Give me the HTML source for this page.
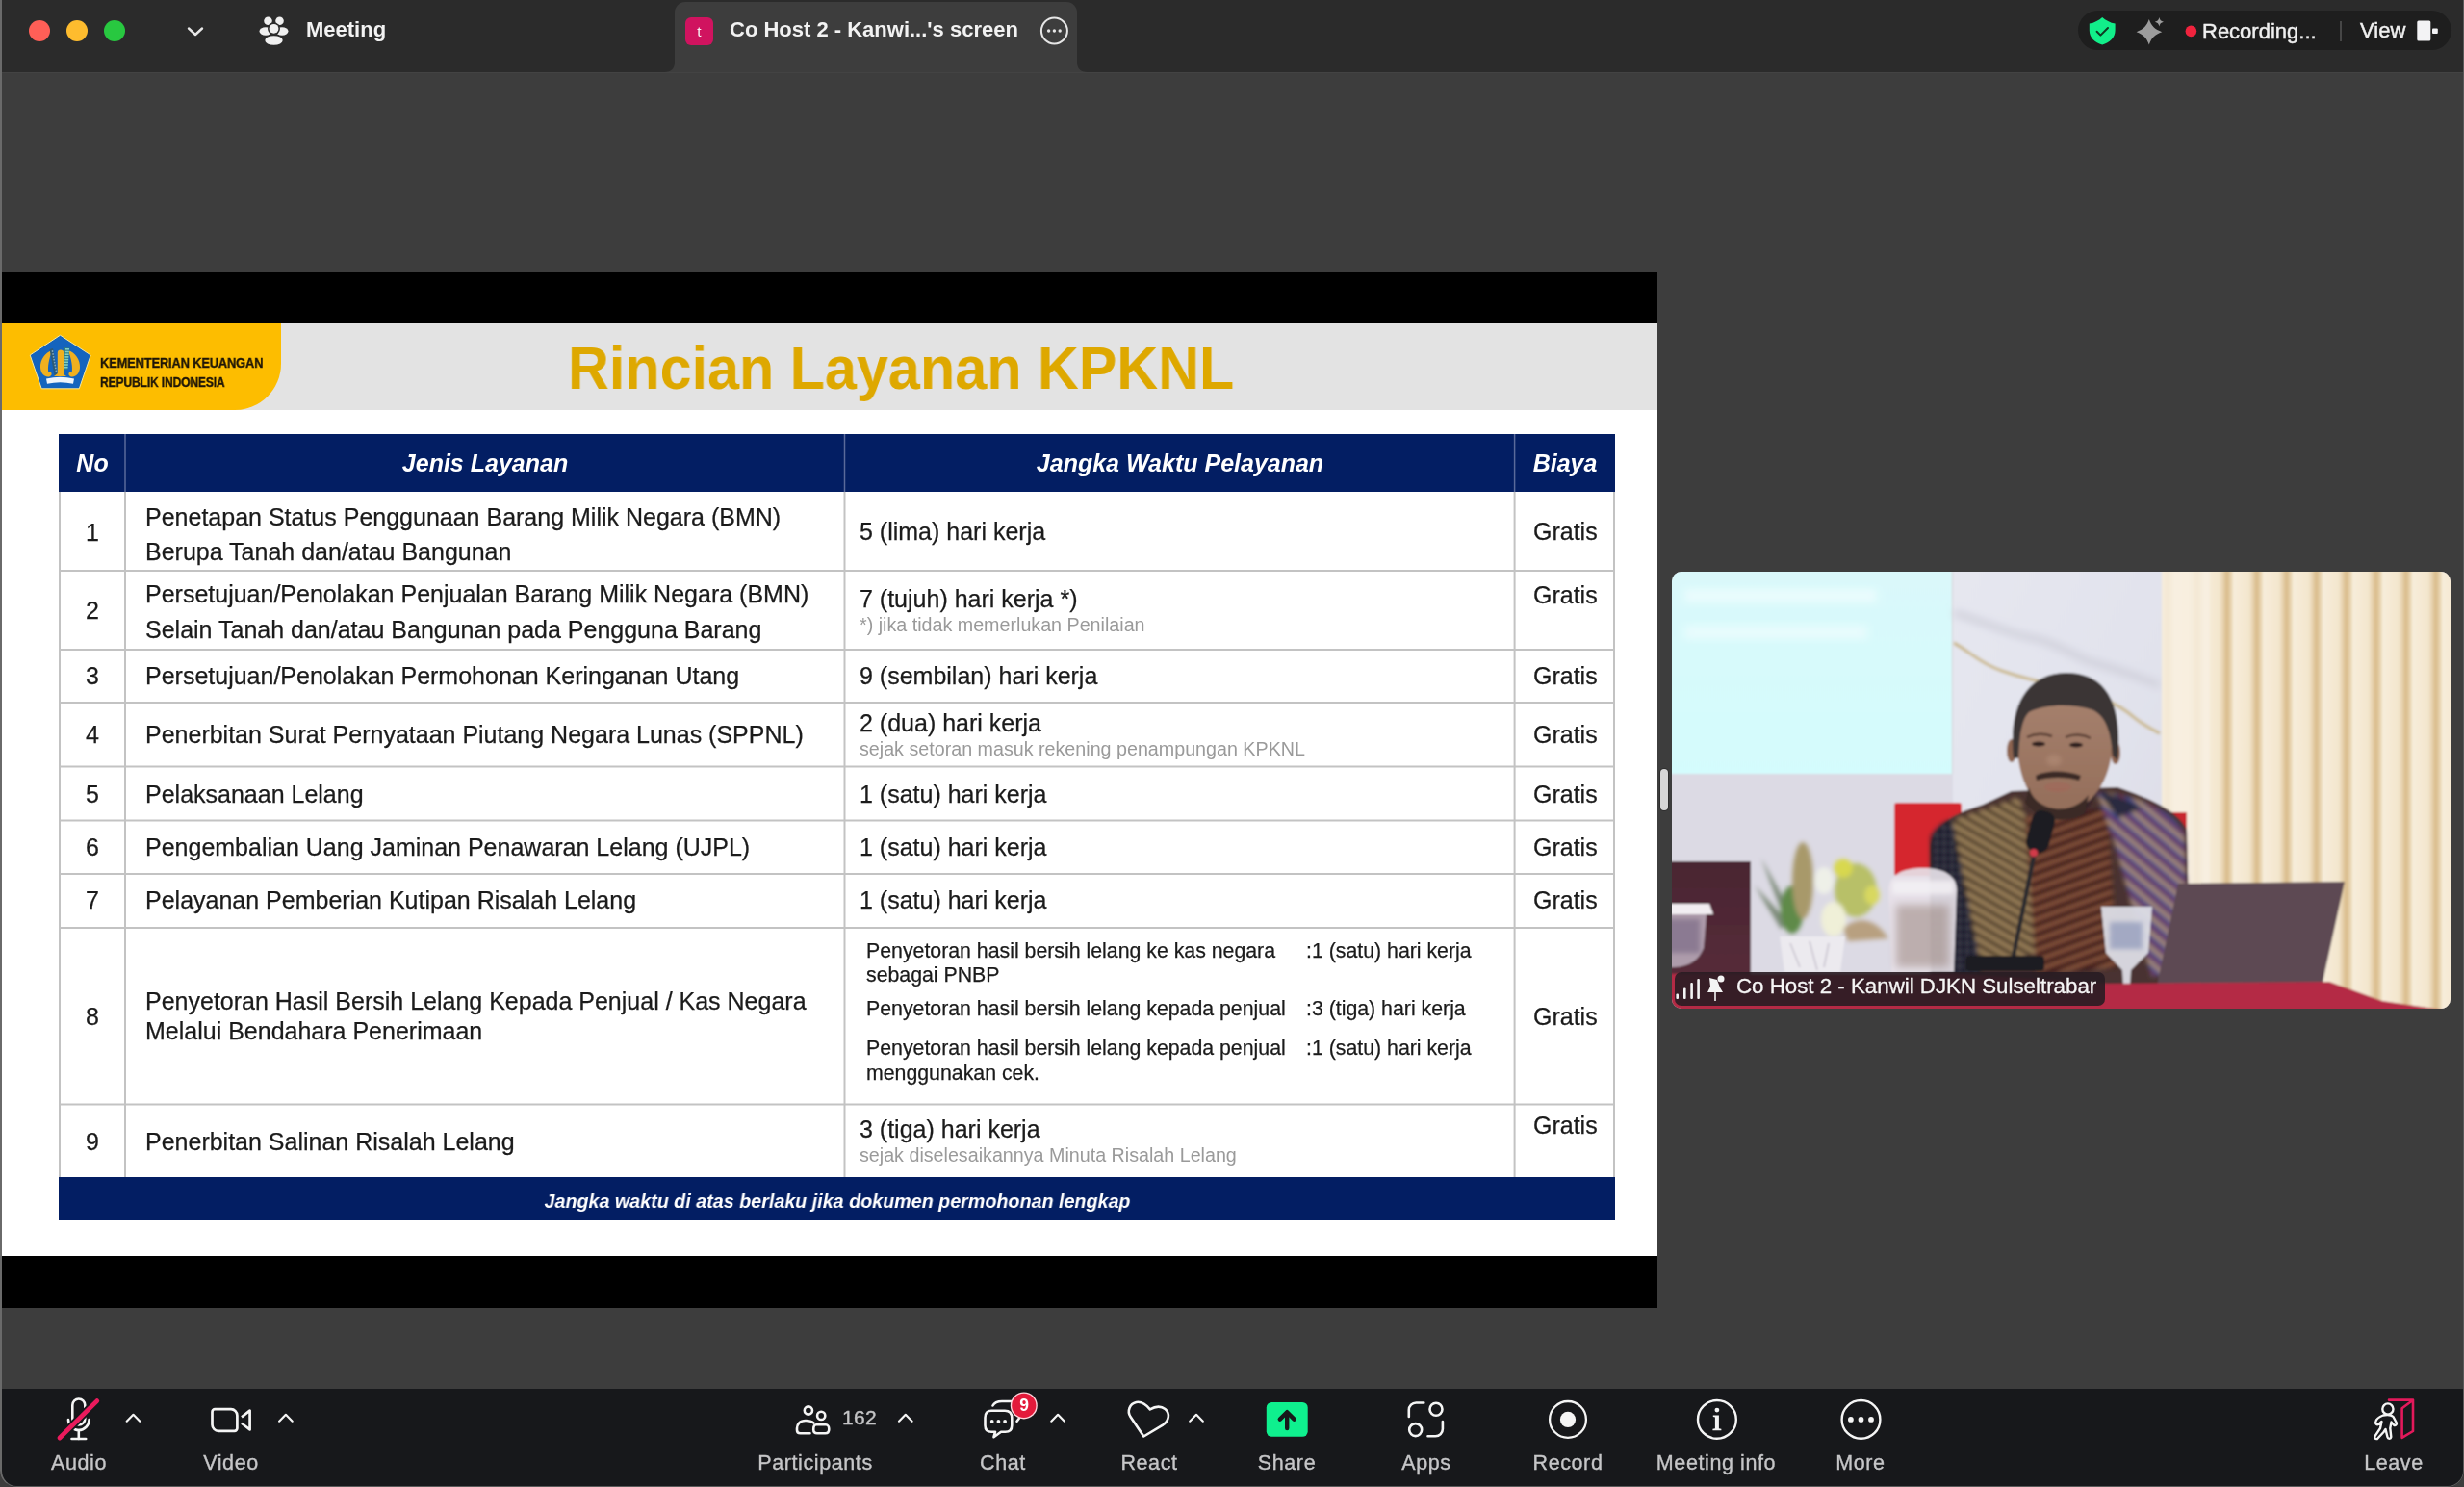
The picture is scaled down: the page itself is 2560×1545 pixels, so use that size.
<!DOCTYPE html><html><head><meta charset="utf-8"><style>
html,body{margin:0;padding:0;}
body{width:2560px;height:1545px;position:relative;overflow:hidden;background:#3d3d3d;font-family:"Liberation Sans", sans-serif;-webkit-font-smoothing:antialiased;}
div{box-sizing:border-box;}
svg{position:absolute;overflow:visible;}
</style></head><body>
<div style="position:absolute;left:0px;top:0px;width:2560px;height:75px;background:#2b2b2b;"></div>
<div style="position:absolute;left:0px;top:75px;width:2560px;height:1px;background:#434343;"></div>
<div style="position:absolute;left:30px;top:21px;width:22px;height:22px;border-radius:50%;background:#ff5f57;"></div>
<div style="position:absolute;left:69px;top:21px;width:22px;height:22px;border-radius:50%;background:#febc2e;"></div>
<div style="position:absolute;left:108px;top:21px;width:22px;height:22px;border-radius:50%;background:#28c840;"></div>
<svg style="left:0;top:0" width="2560" height="75"><polyline points="196,29.5 203,36 210,29.5" fill="none" stroke="#e8e8e8" stroke-width="2.4" stroke-linecap="round" stroke-linejoin="round"/><circle cx="278.5" cy="21.8" r="4.3" fill="#f0f0f0"/><circle cx="290.5" cy="21.8" r="4.3" fill="#f0f0f0"/><ellipse cx="276" cy="32.5" rx="6.5" ry="4.2" fill="#f0f0f0"/><ellipse cx="293" cy="32.5" rx="6.5" ry="4.2" fill="#f0f0f0"/><circle cx="284.5" cy="29.8" r="6.5" fill="#2b2b2b"/><circle cx="284.5" cy="29.8" r="4.9" fill="#f0f0f0"/><ellipse cx="284.5" cy="42" rx="10.5" ry="6" fill="#2b2b2b"/><ellipse cx="284.5" cy="42" rx="9.2" ry="4.8" fill="#f0f0f0"/></svg>
<div style="position:absolute;left:317.5px;top:20.0px;font-size:22px;line-height:22px;color:#f2f2f2;font-weight:bold;font-style:normal;white-space:nowrap;will-change:transform;">Meeting</div>
<div style="position:absolute;left:701px;top:2px;width:418px;height:73px;background:#3d3d3d;border-radius:11px 11px 0 0;"></div>
<svg style="left:0;top:0" width="2560" height="75"><path d="M690,75 Q701,75 701,64 L701,75 Z" fill="#3d3d3d"/><path d="M1130,75 Q1119,75 1119,64 L1119,75 Z" fill="#3d3d3d"/></svg>
<div style="position:absolute;left:711.5px;top:17.5px;width:29px;height:29px;border-radius:6px;background:#d0135f;"></div>
<div style="position:absolute;left:711.5px;top:24.5px;width:29px;text-align:center;font-size:15.5px;line-height:15.5px;color:#f5f5f5;font-weight:normal;font-style:normal;white-space:nowrap;will-change:transform;">t</div>
<div style="position:absolute;left:758.0px;top:19.9px;font-size:22px;line-height:22px;color:#f2f2f2;font-weight:bold;font-style:normal;white-space:nowrap;will-change:transform;">Co Host 2 - Kanwi...&#39;s screen</div>
<svg style="left:0;top:0" width="2560" height="75"><circle cx="1095.4" cy="32" r="13.5" fill="none" stroke="#e6e6e6" stroke-width="2"/><circle cx="1089.6" cy="32" r="1.7" fill="#e6e6e6"/><circle cx="1095.4" cy="32" r="1.7" fill="#e6e6e6"/><circle cx="1101.2" cy="32" r="1.7" fill="#e6e6e6"/></svg>
<div style="position:absolute;left:2159px;top:11px;width:388px;height:41px;border-radius:20.5px;background:#1e1e1e;"></div>
<svg style="left:0;top:0" width="2560" height="75"><path d="M2170.8,24.6 C2176,23.5 2181,21 2184.2,17.9 C2187.5,21 2192.5,23.5 2197.6,24.6 L2197.6,31.5 C2197.6,39.5 2192,44 2184.2,46.4 C2176.4,44 2170.8,39.5 2170.8,31.5 Z" fill="#12ef8a"/><polyline points="2178.6,32.8 2182.4,36.6 2190,29" fill="none" stroke="#0f3a22" stroke-width="2" stroke-linecap="round" stroke-linejoin="round"/><path d="M2232.8,20.000000000000004 C2235.4,27.200000000000003 2238.6000000000004,30.400000000000002 2246.3,33.2 C2238.6000000000004,36.0 2235.4,39.2 2232.8,46.400000000000006 C2230.2000000000003,39.2 2227.0,36.0 2219.6000000000004,33.2 C2227.0,30.400000000000002 2230.2000000000003,27.200000000000003 2232.8,20.000000000000004 Z" fill="#9c9c9c"/><path d="M2243.4,17.9 C2244,20.8 2245,21.9 2248,22.7 C2245,23.5 2244,24.6 2243.4,27.5 C2242.8,24.6 2241.8,23.5 2238.8,22.7 C2241.8,21.9 2242.8,20.8 2243.4,17.9 Z" fill="#9c9c9c"/><circle cx="2276.4" cy="32.4" r="5.8" fill="#f0233d"/><line x1="2432" y1="22" x2="2432" y2="43" stroke="#555" stroke-width="1.5"/><rect x="2511.3" y="21.5" width="14" height="21" rx="1.5" fill="#f3f3f5"/><rect x="2527" y="29.6" width="5.8" height="5.4" rx="1" fill="#f3f3f5"/></svg>
<div style="position:absolute;left:2288.0px;top:22.4px;font-size:22px;line-height:22px;color:#f0f0f0;font-weight:normal;font-style:normal;white-space:nowrap;will-change:transform;-webkit-text-stroke:0.45px #f0f0f0;">Recording...</div>
<div style="position:absolute;left:2452.0px;top:20.9px;font-size:22px;line-height:22px;color:#f0f0f0;font-weight:normal;font-style:normal;white-space:nowrap;will-change:transform;-webkit-text-stroke:0.45px #f0f0f0;">View</div>
<div style="position:absolute;left:2px;top:283px;width:1720px;height:53px;background:#000;"></div>
<div style="position:absolute;left:2px;top:1305px;width:1720px;height:54px;background:#000;"></div>
<div style="position:absolute;left:2px;top:336px;width:1720px;height:969px;background:#fff;"></div>
<div style="position:absolute;left:2px;top:336px;width:1720px;height:90px;background:#e3e3e3;"></div>
<div style="position:absolute;left:2px;top:336px;width:290px;height:90px;background:#fdbd00;border-bottom-right-radius:48px;"></div>
<svg style="left:0;top:0" width="300" height="430"><polygon points="62.5,348.2 94.2,369 82.3,403.8 43.2,403.8 31.2,369" fill="#1464be" stroke="#f3e6a0" stroke-width="1" stroke-linejoin="round"/><path d="M54.3,364 C47.0,366 41.5,374 42.0,382 C42.5,388 46.0,391.5 50.0,391.5 C53.0,391.5 54.5,389 53.0,387 C52.0,385.5 50.5,386 50.5,387.5 C49.0,382 51.0,372 54.3,364 Z" fill="#f0b020"/><path d="M70.7,364 C78.0,366 83.5,374 83.0,382 C82.5,388 79.0,391.5 75.0,391.5 C72.0,391.5 70.5,389 72.0,387 C73.0,385.5 74.5,386 74.5,387.5 C76.0,382 74.0,372 70.7,364 Z" fill="#f0b020"/><path d="M51.5,363 L55,362 L60,390 L56.5,390 Z" fill="#2b5a78"/><circle cx="54.50" cy="365.0" r="0.9" fill="#7fa8c0"/><circle cx="55.05" cy="367.9" r="0.9" fill="#7fa8c0"/><circle cx="55.60" cy="370.8" r="0.9" fill="#7fa8c0"/><circle cx="56.15" cy="373.7" r="0.9" fill="#7fa8c0"/><circle cx="56.70" cy="376.6" r="0.9" fill="#7fa8c0"/><circle cx="57.25" cy="379.5" r="0.9" fill="#7fa8c0"/><circle cx="57.80" cy="382.4" r="0.9" fill="#7fa8c0"/><circle cx="58.35" cy="385.3" r="0.9" fill="#7fa8c0"/><rect x="59.8" y="363.5" width="6.4" height="27" rx="3.2" fill="#f0b020"/><path d="M67,361 L72.5,361.5 L70,384 L66,384 Z" fill="#2f7a80"/><rect x="68.00" y="362.0" width="4" height="1.6" fill="#7fd0c8"/><rect x="67.80" y="364.7" width="4" height="1.6" fill="#7fd0c8"/><rect x="67.60" y="367.4" width="4" height="1.6" fill="#7fd0c8"/><rect x="67.40" y="370.1" width="4" height="1.6" fill="#7fd0c8"/><rect x="67.20" y="372.8" width="4" height="1.6" fill="#7fd0c8"/><rect x="67.00" y="375.5" width="4" height="1.6" fill="#7fd0c8"/><rect x="66.80" y="378.2" width="4" height="1.6" fill="#7fd0c8"/><rect x="66.60" y="380.9" width="4" height="1.6" fill="#7fd0c8"/><path d="M56,391 L62.5,386 L69,391 Z" fill="#f0b020"/><path d="M48,393.5 Q62.5,390 77,393.5 L76,398.8 Q62.5,395.5 49,398.8 Z" fill="#eef4fb"/></svg>
<div style="position:absolute;left:104.2px;top:369.2px;font-size:15px;line-height:15px;color:#1e1608;font-weight:bold;font-style:normal;white-space:nowrap;will-change:transform;transform:scaleX(0.86);transform-origin:0 0;letter-spacing:-0.2px;-webkit-text-stroke:0.35px #1e1608;">KEMENTERIAN KEUANGAN</div>
<div style="position:absolute;left:104.2px;top:389.5px;font-size:14.5px;line-height:14.5px;color:#1e1608;font-weight:bold;font-style:normal;white-space:nowrap;will-change:transform;transform:scaleX(0.835);transform-origin:0 0;letter-spacing:-0.2px;-webkit-text-stroke:0.35px #1e1608;">REPUBLIK INDONESIA</div>
<div style="position:absolute;left:590.0px;top:350.7px;font-size:63px;line-height:63px;color:#dea800;font-weight:bold;font-style:normal;white-space:nowrap;will-change:transform;transform:scaleX(0.9415);transform-origin:0 0;">Rincian Layanan KPKNL</div>
<div style="position:absolute;left:61px;top:451px;width:1617px;height:60px;background:#031e63;"></div>
<svg style="left:0;top:0" width="1722" height="1300"><line x1="61" y1="593" x2="1678" y2="593" stroke="#c3c3c3" stroke-width="2"/><line x1="61" y1="675" x2="1678" y2="675" stroke="#c3c3c3" stroke-width="2"/><line x1="61" y1="730" x2="1678" y2="730" stroke="#c3c3c3" stroke-width="2"/><line x1="61" y1="796.5" x2="1678" y2="796.5" stroke="#c3c3c3" stroke-width="2"/><line x1="61" y1="852.4" x2="1678" y2="852.4" stroke="#c3c3c3" stroke-width="2"/><line x1="61" y1="908" x2="1678" y2="908" stroke="#c3c3c3" stroke-width="2"/><line x1="61" y1="964" x2="1678" y2="964" stroke="#c3c3c3" stroke-width="2"/><line x1="61" y1="1147.6" x2="1678" y2="1147.6" stroke="#c3c3c3" stroke-width="2"/><line x1="62" y1="511" x2="62" y2="1223" stroke="#c3c3c3" stroke-width="2"/><line x1="130" y1="511" x2="130" y2="1223" stroke="#c3c3c3" stroke-width="2"/><line x1="877.5" y1="511" x2="877.5" y2="1223" stroke="#c3c3c3" stroke-width="2"/><line x1="1573.6" y1="511" x2="1573.6" y2="1223" stroke="#c3c3c3" stroke-width="2"/><line x1="1677" y1="511" x2="1677" y2="1223" stroke="#c3c3c3" stroke-width="2"/><line x1="130" y1="451" x2="130" y2="511" stroke="#5a6a9a" stroke-width="1.5"/><line x1="877.5" y1="451" x2="877.5" y2="511" stroke="#5a6a9a" stroke-width="1.5"/><line x1="1573.6" y1="451" x2="1573.6" y2="511" stroke="#5a6a9a" stroke-width="1.5"/></svg>
<div style="position:absolute;left:61px;top:1223px;width:1617px;height:45px;background:#031e63;"></div>
<div style="position:absolute;left:-304.5px;top:469.3px;width:800px;text-align:center;font-size:25px;line-height:25px;color:#fff;font-weight:bold;font-style:italic;white-space:nowrap;will-change:transform;">No</div>
<div style="position:absolute;left:103.8px;top:469.3px;width:800px;text-align:center;font-size:25px;line-height:25px;color:#fff;font-weight:bold;font-style:italic;white-space:nowrap;will-change:transform;">Jenis Layanan</div>
<div style="position:absolute;left:825.5px;top:469.3px;width:800px;text-align:center;font-size:25px;line-height:25px;color:#fff;font-weight:bold;font-style:italic;white-space:nowrap;will-change:transform;">Jangka Waktu Pelayanan</div>
<div style="position:absolute;left:1225.8px;top:469.3px;width:800px;text-align:center;font-size:25px;line-height:25px;color:#fff;font-weight:bold;font-style:italic;white-space:nowrap;will-change:transform;">Biaya</div>
<div style="position:absolute;left:65.5px;top:540.8px;width:60px;text-align:center;font-size:25px;line-height:25px;color:#1b1b1b;font-weight:normal;font-style:normal;white-space:nowrap;will-change:transform;-webkit-text-stroke:0.25px #1b1b1b;">1</div>
<div style="position:absolute;left:65.5px;top:621.7px;width:60px;text-align:center;font-size:25px;line-height:25px;color:#1b1b1b;font-weight:normal;font-style:normal;white-space:nowrap;will-change:transform;-webkit-text-stroke:0.25px #1b1b1b;">2</div>
<div style="position:absolute;left:65.5px;top:690.4px;width:60px;text-align:center;font-size:25px;line-height:25px;color:#1b1b1b;font-weight:normal;font-style:normal;white-space:nowrap;will-change:transform;-webkit-text-stroke:0.25px #1b1b1b;">3</div>
<div style="position:absolute;left:65.5px;top:751.1px;width:60px;text-align:center;font-size:25px;line-height:25px;color:#1b1b1b;font-weight:normal;font-style:normal;white-space:nowrap;will-change:transform;-webkit-text-stroke:0.25px #1b1b1b;">4</div>
<div style="position:absolute;left:65.5px;top:812.5px;width:60px;text-align:center;font-size:25px;line-height:25px;color:#1b1b1b;font-weight:normal;font-style:normal;white-space:nowrap;will-change:transform;-webkit-text-stroke:0.25px #1b1b1b;">5</div>
<div style="position:absolute;left:65.5px;top:867.7px;width:60px;text-align:center;font-size:25px;line-height:25px;color:#1b1b1b;font-weight:normal;font-style:normal;white-space:nowrap;will-change:transform;-webkit-text-stroke:0.25px #1b1b1b;">6</div>
<div style="position:absolute;left:65.5px;top:923.3px;width:60px;text-align:center;font-size:25px;line-height:25px;color:#1b1b1b;font-weight:normal;font-style:normal;white-space:nowrap;will-change:transform;-webkit-text-stroke:0.25px #1b1b1b;">7</div>
<div style="position:absolute;left:65.5px;top:1043.8px;width:60px;text-align:center;font-size:25px;line-height:25px;color:#1b1b1b;font-weight:normal;font-style:normal;white-space:nowrap;will-change:transform;-webkit-text-stroke:0.25px #1b1b1b;">8</div>
<div style="position:absolute;left:65.5px;top:1173.5px;width:60px;text-align:center;font-size:25px;line-height:25px;color:#1b1b1b;font-weight:normal;font-style:normal;white-space:nowrap;will-change:transform;-webkit-text-stroke:0.25px #1b1b1b;">9</div>
<div style="position:absolute;left:151.3px;top:524.5px;font-size:25px;line-height:25px;color:#1b1b1b;font-weight:normal;font-style:normal;white-space:nowrap;will-change:transform;-webkit-text-stroke:0.25px #1b1b1b;">Penetapan Status Penggunaan Barang Milik Negara (BMN)</div>
<div style="position:absolute;left:151.3px;top:561.3px;font-size:25px;line-height:25px;color:#1b1b1b;font-weight:normal;font-style:normal;white-space:nowrap;will-change:transform;-webkit-text-stroke:0.25px #1b1b1b;">Berupa Tanah dan/atau Bangunan</div>
<div style="position:absolute;left:151.3px;top:604.6px;font-size:25px;line-height:25px;color:#1b1b1b;font-weight:normal;font-style:normal;white-space:nowrap;will-change:transform;-webkit-text-stroke:0.25px #1b1b1b;">Persetujuan/Penolakan Penjualan Barang Milik Negara (BMN)</div>
<div style="position:absolute;left:151.3px;top:642.1px;font-size:25px;line-height:25px;color:#1b1b1b;font-weight:normal;font-style:normal;white-space:nowrap;will-change:transform;-webkit-text-stroke:0.25px #1b1b1b;">Selain Tanah dan/atau Bangunan pada Pengguna Barang</div>
<div style="position:absolute;left:151.3px;top:690.4px;font-size:25px;line-height:25px;color:#1b1b1b;font-weight:normal;font-style:normal;white-space:nowrap;will-change:transform;-webkit-text-stroke:0.25px #1b1b1b;">Persetujuan/Penolakan Permohonan Keringanan Utang</div>
<div style="position:absolute;left:151.3px;top:751.1px;font-size:25px;line-height:25px;color:#1b1b1b;font-weight:normal;font-style:normal;white-space:nowrap;will-change:transform;-webkit-text-stroke:0.25px #1b1b1b;">Penerbitan Surat Pernyataan Piutang Negara Lunas (SPPNL)</div>
<div style="position:absolute;left:151.3px;top:812.5px;font-size:25px;line-height:25px;color:#1b1b1b;font-weight:normal;font-style:normal;white-space:nowrap;will-change:transform;-webkit-text-stroke:0.25px #1b1b1b;">Pelaksanaan Lelang</div>
<div style="position:absolute;left:151.3px;top:867.7px;font-size:25px;line-height:25px;color:#1b1b1b;font-weight:normal;font-style:normal;white-space:nowrap;will-change:transform;-webkit-text-stroke:0.25px #1b1b1b;">Pengembalian Uang Jaminan Penawaran Lelang (UJPL)</div>
<div style="position:absolute;left:151.3px;top:923.3px;font-size:25px;line-height:25px;color:#1b1b1b;font-weight:normal;font-style:normal;white-space:nowrap;will-change:transform;-webkit-text-stroke:0.25px #1b1b1b;">Pelayanan Pemberian Kutipan Risalah Lelang</div>
<div style="position:absolute;left:151.3px;top:1028.2px;font-size:25px;line-height:25px;color:#1b1b1b;font-weight:normal;font-style:normal;white-space:nowrap;will-change:transform;-webkit-text-stroke:0.25px #1b1b1b;">Penyetoran Hasil Bersih Lelang Kepada Penjual / Kas Negara</div>
<div style="position:absolute;left:151.3px;top:1058.9px;font-size:25px;line-height:25px;color:#1b1b1b;font-weight:normal;font-style:normal;white-space:nowrap;will-change:transform;-webkit-text-stroke:0.25px #1b1b1b;">Melalui Bendahara Penerimaan</div>
<div style="position:absolute;left:151.3px;top:1173.5px;font-size:25px;line-height:25px;color:#1b1b1b;font-weight:normal;font-style:normal;white-space:nowrap;will-change:transform;-webkit-text-stroke:0.25px #1b1b1b;">Penerbitan Salinan Risalah Lelang</div>
<div style="position:absolute;left:893.0px;top:539.8px;font-size:25px;line-height:25px;color:#1b1b1b;font-weight:normal;font-style:normal;white-space:nowrap;will-change:transform;-webkit-text-stroke:0.25px #1b1b1b;">5 (lima) hari kerja</div>
<div style="position:absolute;left:893.0px;top:609.8px;font-size:25px;line-height:25px;color:#1b1b1b;font-weight:normal;font-style:normal;white-space:nowrap;will-change:transform;-webkit-text-stroke:0.25px #1b1b1b;">7 (tujuh) hari kerja *)</div>
<div style="position:absolute;left:893.0px;top:690.4px;font-size:25px;line-height:25px;color:#1b1b1b;font-weight:normal;font-style:normal;white-space:nowrap;will-change:transform;-webkit-text-stroke:0.25px #1b1b1b;">9 (sembilan) hari kerja</div>
<div style="position:absolute;left:893.0px;top:739.1px;font-size:25px;line-height:25px;color:#1b1b1b;font-weight:normal;font-style:normal;white-space:nowrap;will-change:transform;-webkit-text-stroke:0.25px #1b1b1b;">2 (dua) hari kerja</div>
<div style="position:absolute;left:893.0px;top:812.5px;font-size:25px;line-height:25px;color:#1b1b1b;font-weight:normal;font-style:normal;white-space:nowrap;will-change:transform;-webkit-text-stroke:0.25px #1b1b1b;">1 (satu) hari kerja</div>
<div style="position:absolute;left:893.0px;top:867.7px;font-size:25px;line-height:25px;color:#1b1b1b;font-weight:normal;font-style:normal;white-space:nowrap;will-change:transform;-webkit-text-stroke:0.25px #1b1b1b;">1 (satu) hari kerja</div>
<div style="position:absolute;left:893.0px;top:923.3px;font-size:25px;line-height:25px;color:#1b1b1b;font-weight:normal;font-style:normal;white-space:nowrap;will-change:transform;-webkit-text-stroke:0.25px #1b1b1b;">1 (satu) hari kerja</div>
<div style="position:absolute;left:893.0px;top:1160.5px;font-size:25px;line-height:25px;color:#1b1b1b;font-weight:normal;font-style:normal;white-space:nowrap;will-change:transform;-webkit-text-stroke:0.25px #1b1b1b;">3 (tiga) hari kerja</div>
<div style="position:absolute;left:893.0px;top:639.8px;font-size:19.7px;line-height:19.7px;color:#9a9a9a;font-weight:normal;font-style:normal;white-space:nowrap;will-change:transform;">*) jika tidak memerlukan Penilaian</div>
<div style="position:absolute;left:893.0px;top:768.5px;font-size:19.7px;line-height:19.7px;color:#9a9a9a;font-weight:normal;font-style:normal;white-space:nowrap;will-change:transform;">sejak setoran masuk rekening penampungan KPKNL</div>
<div style="position:absolute;left:893.0px;top:1190.6px;font-size:19.7px;line-height:19.7px;color:#9a9a9a;font-weight:normal;font-style:normal;white-space:nowrap;will-change:transform;">sejak diselesaikannya Minuta Risalah Lelang</div>
<div style="position:absolute;left:900.0px;top:977.5px;font-size:21.3px;line-height:21.3px;color:#1b1b1b;font-weight:normal;font-style:normal;white-space:nowrap;will-change:transform;-webkit-text-stroke:0.25px #1b1b1b;">Penyetoran hasil bersih lelang ke kas negara</div>
<div style="position:absolute;left:900.0px;top:1003.0px;font-size:21.3px;line-height:21.3px;color:#1b1b1b;font-weight:normal;font-style:normal;white-space:nowrap;will-change:transform;-webkit-text-stroke:0.25px #1b1b1b;">sebagai PNBP</div>
<div style="position:absolute;left:900.0px;top:1038.0px;font-size:21.3px;line-height:21.3px;color:#1b1b1b;font-weight:normal;font-style:normal;white-space:nowrap;will-change:transform;-webkit-text-stroke:0.25px #1b1b1b;">Penyetoran hasil bersih lelang kepada penjual</div>
<div style="position:absolute;left:900.0px;top:1079.0px;font-size:21.3px;line-height:21.3px;color:#1b1b1b;font-weight:normal;font-style:normal;white-space:nowrap;will-change:transform;-webkit-text-stroke:0.25px #1b1b1b;">Penyetoran hasil bersih lelang kepada penjual</div>
<div style="position:absolute;left:900.0px;top:1105.2px;font-size:21.3px;line-height:21.3px;color:#1b1b1b;font-weight:normal;font-style:normal;white-space:nowrap;will-change:transform;-webkit-text-stroke:0.25px #1b1b1b;">menggunakan cek.</div>
<div style="position:absolute;left:1357.0px;top:977.5px;font-size:21.3px;line-height:21.3px;color:#1b1b1b;font-weight:normal;font-style:normal;white-space:nowrap;will-change:transform;-webkit-text-stroke:0.25px #1b1b1b;">:1 (satu) hari kerja</div>
<div style="position:absolute;left:1357.0px;top:1038.0px;font-size:21.3px;line-height:21.3px;color:#1b1b1b;font-weight:normal;font-style:normal;white-space:nowrap;will-change:transform;-webkit-text-stroke:0.25px #1b1b1b;">:3 (tiga) hari kerja</div>
<div style="position:absolute;left:1357.0px;top:1079.0px;font-size:21.3px;line-height:21.3px;color:#1b1b1b;font-weight:normal;font-style:normal;white-space:nowrap;will-change:transform;-webkit-text-stroke:0.25px #1b1b1b;">:1 (satu) hari kerja</div>
<div style="position:absolute;left:1593.0px;top:539.8px;font-size:25px;line-height:25px;color:#1b1b1b;font-weight:normal;font-style:normal;white-space:nowrap;will-change:transform;-webkit-text-stroke:0.25px #1b1b1b;">Gratis</div>
<div style="position:absolute;left:1593.0px;top:606.3px;font-size:25px;line-height:25px;color:#1b1b1b;font-weight:normal;font-style:normal;white-space:nowrap;will-change:transform;-webkit-text-stroke:0.25px #1b1b1b;">Gratis</div>
<div style="position:absolute;left:1593.0px;top:690.4px;font-size:25px;line-height:25px;color:#1b1b1b;font-weight:normal;font-style:normal;white-space:nowrap;will-change:transform;-webkit-text-stroke:0.25px #1b1b1b;">Gratis</div>
<div style="position:absolute;left:1593.0px;top:751.1px;font-size:25px;line-height:25px;color:#1b1b1b;font-weight:normal;font-style:normal;white-space:nowrap;will-change:transform;-webkit-text-stroke:0.25px #1b1b1b;">Gratis</div>
<div style="position:absolute;left:1593.0px;top:812.5px;font-size:25px;line-height:25px;color:#1b1b1b;font-weight:normal;font-style:normal;white-space:nowrap;will-change:transform;-webkit-text-stroke:0.25px #1b1b1b;">Gratis</div>
<div style="position:absolute;left:1593.0px;top:867.7px;font-size:25px;line-height:25px;color:#1b1b1b;font-weight:normal;font-style:normal;white-space:nowrap;will-change:transform;-webkit-text-stroke:0.25px #1b1b1b;">Gratis</div>
<div style="position:absolute;left:1593.0px;top:923.3px;font-size:25px;line-height:25px;color:#1b1b1b;font-weight:normal;font-style:normal;white-space:nowrap;will-change:transform;-webkit-text-stroke:0.25px #1b1b1b;">Gratis</div>
<div style="position:absolute;left:1593.0px;top:1043.6px;font-size:25px;line-height:25px;color:#1b1b1b;font-weight:normal;font-style:normal;white-space:nowrap;will-change:transform;-webkit-text-stroke:0.25px #1b1b1b;">Gratis</div>
<div style="position:absolute;left:1593.0px;top:1157.1px;font-size:25px;line-height:25px;color:#1b1b1b;font-weight:normal;font-style:normal;white-space:nowrap;will-change:transform;-webkit-text-stroke:0.25px #1b1b1b;">Gratis</div>
<div style="position:absolute;left:169.5px;top:1237.2px;width:1400px;text-align:center;font-size:21px;line-height:21px;color:#fff;font-weight:bold;font-style:italic;white-space:nowrap;will-change:transform;transform:scaleX(0.9385);">Jangka waktu di atas berlaku jika dokumen permohonan lengkap</div>
<div style="position:absolute;left:1724.8px;top:799.4px;width:7.8px;height:43px;border-radius:4px;background:#d6d6d6;box-shadow:0 0 0 1px rgba(30,30,30,0.5);"></div>
<div style="position:absolute;left:1737px;top:594px;width:809px;height:454px;border-radius:10px;overflow:hidden;background:#d8d2d6;">
<svg style="left:0;top:0" width="809" height="454" viewBox="1737 594 809 454"><defs><filter id="b1" x="-10%" y="-10%" width="120%" height="120%"><feGaussianBlur stdDeviation="1.2"/></filter><filter id="b2" x="-20%" y="-20%" width="140%" height="140%"><feGaussianBlur stdDeviation="2"/></filter><filter id="b4" x="-30%" y="-30%" width="160%" height="160%"><feGaussianBlur stdDeviation="4"/></filter><filter id="b8" x="-30%" y="-30%" width="160%" height="160%"><feGaussianBlur stdDeviation="8"/></filter><linearGradient id="cy" x1="0" y1="0" x2="0" y2="1"><stop offset="0" stop-color="#daf8fa"/><stop offset="1" stop-color="#d4fcfd"/></linearGradient><linearGradient id="mar" x1="0" y1="0" x2="1" y2="1"><stop offset="0" stop-color="#e6e7f0"/><stop offset="0.6" stop-color="#e1e2ec"/><stop offset="1" stop-color="#dcdbe4"/></linearGradient><linearGradient id="st" x1="0" y1="0" x2="1" y2="0"><stop offset="0" stop-color="#f7eddb"/><stop offset="0.55" stop-color="#f3e6cd"/><stop offset="0.8" stop-color="#d9bb8a"/><stop offset="1" stop-color="#f0e2c6"/></linearGradient><pattern id="stp" x="2289" y="0" width="31" height="454" patternUnits="userSpaceOnUse"><rect width="31" height="454" fill="url(#st)"/></pattern><linearGradient id="face" x1="0" y1="0" x2="0" y2="1"><stop offset="0" stop-color="#a88370"/><stop offset="1" stop-color="#946e5a"/></linearGradient></defs><g filter="url(#b1)"><rect x="1730" y="590" width="298" height="214" fill="url(#cy)"/><rect x="1750" y="612" width="200" height="14" fill="#ecfdfe" opacity="0.9" filter="url(#b4)"/><rect x="1750" y="650" width="190" height="14" fill="#ecfdfe" opacity="0.8" filter="url(#b4)"/><rect x="1730" y="804" width="300" height="252" fill="#dcdae4"/><rect x="2029" y="590" width="217" height="466" fill="url(#mar)"/><path d="M2030,668 C2045,676 2058,690 2080,697 C2100,704 2115,708 2140,712 C2170,718 2200,730 2218,746 C2228,754 2236,758 2244,762" fill="none" stroke="#c6b07e" stroke-width="2.6" filter="url(#b1)"/><path d="M2030,637 C2060,645 2090,660 2112,663 C2135,667 2155,682 2173,688 C2200,695 2225,705 2244,712" fill="none" stroke="#c9c9d3" stroke-width="5" filter="url(#b4)"/><rect x="2246" y="590" width="310" height="466" fill="url(#stp)"/><rect x="2246" y="590" width="50" height="466" fill="#f8f0e2" opacity="0.85"/><rect x="1968" y="834" width="70" height="76" rx="3" fill="#d5282f"/><rect x="2252" y="844" width="20" height="75" fill="#c8262e"/><defs><pattern id="gold" width="9" height="9" patternUnits="userSpaceOnUse" patternTransform="rotate(30)"><rect width="9" height="9" fill="#a88c62"/><rect width="9" height="4.5" fill="#35251f"/></pattern><pattern id="navy" width="8" height="8" patternUnits="userSpaceOnUse"><rect width="8" height="8" fill="#1c1d2c"/><circle cx="4" cy="4" r="1.3" fill="#7c7a90"/></pattern><pattern id="redp" width="10" height="10" patternUnits="userSpaceOnUse" patternTransform="rotate(-20)"><rect width="10" height="10" fill="#5e2622"/><rect width="10" height="2.5" fill="#9a6a4a"/><rect y="5" width="10" height="3" fill="#24181a"/></pattern><pattern id="bluep" width="12" height="12" patternUnits="userSpaceOnUse" patternTransform="rotate(40)"><rect width="12" height="12" fill="#3a4a8e"/><rect width="12" height="4" fill="#b09070"/><rect y="8" width="12" height="2" fill="#8a2a30"/></pattern></defs><path d="M2007,1040 L2005,880 C2008,858 2030,845 2060,836 L2090,822 L2200,818 C2235,830 2262,842 2272,862 L2276,1040 Z" fill="#4a3330"/><g filter="url(#b2)"><path d="M2006,870 C2012,856 2025,850 2040,850 L2060,1040 L2007,1040 Z" fill="url(#navy)"/><path d="M2028,852 L2098,828 L2112,870 L2120,990 L2058,1005 Z" fill="url(#gold)"/><path d="M2104,848 L2190,840 L2200,1005 L2116,1012 Z" fill="url(#redp)"/><path d="M2178,822 C2220,826 2255,840 2270,865 L2274,1010 L2235,1015 L2195,870 Z" fill="url(#bluep)"/><path d="M2180,822 C2200,826 2215,832 2225,840 L2200,850 Z" fill="#2a2a40"/><path d="M2120,825 L2150,835 L2180,820 L2165,845 L2135,848 Z" fill="#2a1e26"/></g><path d="M2095,765 C2093,735 2110,712 2146,710 C2180,710 2195,735 2195,765 C2195,795 2187,818 2168,834 C2152,845 2128,845 2115,832 C2100,815 2096,792 2095,765 Z" fill="url(#face)"/><ellipse cx="2090" cy="780" rx="5" ry="12" fill="#8d644f"/><ellipse cx="2198" cy="782" rx="5" ry="12" fill="#8d644f"/><path d="M2092,788 C2086,735 2105,700 2146,699 C2188,699 2206,730 2200,790 L2195,785 C2193,760 2188,745 2175,738 C2155,731 2125,731 2108,740 C2100,748 2098,765 2097,788 Z" fill="#3a3535"/><ellipse cx="2118" cy="773" rx="7" ry="2.6" fill="#2a1e1c"/><ellipse cx="2157" cy="774" rx="7" ry="2.6" fill="#2a1e1c"/><path d="M2106,766 C2114,762 2124,762 2132,765 M2146,766 C2154,762 2165,763 2172,767" stroke="#5a4036" stroke-width="2.5" fill="none"/><ellipse cx="2134" cy="790" rx="8" ry="6" fill="#b08a74" opacity="0.7" filter="url(#b2)"/><path d="M2115,806 C2125,800 2148,800 2162,806 L2160,811 C2148,807 2128,807 2116,811 Z" fill="#3a2c28"/><ellipse cx="2138" cy="818" rx="14" ry="5" fill="#a06a5a" opacity="0.8"/><path d="M2108,818 C2114,842 2150,850 2170,826 L2166,845 C2150,856 2118,854 2104,834 Z" fill="#3a2c28"/><path d="M2112,884 L2116,886 L2092,1003 L2088,1002 Z" fill="#2a2a2e"/><rect x="2108" y="842" width="24" height="44" rx="10" fill="#1d1d20" transform="rotate(15 2120 864)"/><circle cx="2113" cy="886" r="4" fill="#d23a4a"/><defs><linearGradient id="llap" x1="0" y1="0" x2="0" y2="1"><stop offset="0" stop-color="#4a2532"/><stop offset="1" stop-color="#5a2e3c"/></linearGradient></defs><rect x="1730" y="895" width="89" height="160" fill="url(#llap)"/><path d="M1730,939 L1776,939 L1780,950 L1730,950 Z" fill="#f2eef2"/><path d="M1730,950 L1773,950 L1770,985 C1765,998 1755,1004 1740,1005 L1730,1005 Z" fill="#b8a8b8" opacity="0.9"/><rect x="1732" y="955" width="34" height="35" fill="#6a5a7a" opacity="0.5" filter="url(#b2)"/><g filter="url(#b2)"><path d="M1823,920 L1860,960 L1850,965 Z" fill="#7c8a78"/><path d="M1830,892 L1865,955 L1855,958 Z" fill="#7c8a78"/><ellipse cx="1862" cy="945" rx="12" ry="25" fill="#5f8a4a"/><ellipse cx="1873" cy="915" rx="11" ry="40" fill="#a8996a"/><ellipse cx="1928" cy="925" rx="22" ry="28" fill="#b8c068"/><ellipse cx="1915" cy="902" rx="10" ry="10" fill="#d8d850"/><ellipse cx="1945" cy="930" rx="8" ry="10" fill="#d8d860"/><ellipse cx="1905" cy="955" rx="13" ry="18" fill="#f0f0d8"/><ellipse cx="1895" cy="915" rx="10" ry="14" fill="#eef0e8"/><path d="M1915,965 C1930,950 1950,955 1962,975 L1920,978 Z" fill="#b8a080"/></g><path d="M1849,973 L1917,973 L1912,1010 L1854,1010 Z" fill="#eceaef"/><path d="M1860,980 L1870,1005 M1880,978 L1888,1008 M1900,980 L1895,1005" stroke="#d0ccd6" stroke-width="2"/><path d="M1962,925 C1962,910 1975,902 1998,902 C2020,902 2033,910 2033,925 L2030,1010 L1965,1010 Z" fill="#e6e1e8" opacity="0.92"/><rect x="1970" y="940" width="55" height="65" fill="#8a7268" opacity="0.45" filter="url(#b4)"/><rect x="1966" y="915" width="64" height="14" fill="#f4f2f6" opacity="0.8" filter="url(#b2)"/><rect x="2042" y="993" width="82" height="16" rx="4" fill="#1e1e24"/><polygon points="2263,918 2436,916 2411,1030 2239,1034" fill="#5d4a53"/><path d="M2183,942 L2236,942 L2232,990 L2214,1008 L2213,1025 L2226,1030 L2193,1030 L2206,1025 L2205,1008 L2188,990 Z" fill="#dcdde6" opacity="0.95"/><rect x="2192" y="958" width="34" height="28" fill="#5a6aa0" opacity="0.4" filter="url(#b2)"/><path d="M1730,1012 L2030,1012 L2190,1022 L2420,1020 L2475,1040 L2556,1052 L1730,1052 Z" fill="#b42a44"/></g></svg>
</div>
<div style="position:absolute;left:1740px;top:1010px;width:447px;height:35px;border-radius:7px;background:rgba(40,28,34,0.9);"></div>
<svg style="left:0;top:0" width="2560" height="1100"><rect x="1741.4" y="1032.6" width="2.6" height="5.4" rx="1" fill="#f4f4f4"/><rect x="1749" y="1026.6" width="2.6" height="11.4" rx="1" fill="#f4f4f4"/><rect x="1756.3" y="1021" width="2.6" height="17" rx="1" fill="#f4f4f4"/><rect x="1763.3" y="1017" width="2.6" height="21" rx="1" fill="#f4f4f4"/><path d="M1776,1016 L1784,1018 L1787,1026 L1790,1031 L1774,1031 L1777,1025 Z" fill="#f4f4f4"/><rect x="1781.2" y="1030" width="1.6" height="10" fill="#f4f4f4"/><circle cx="1788" cy="1017" r="3.5" fill="#f4f4f4"/></svg>
<div style="position:absolute;left:1804.2px;top:1014.1px;font-size:22.3px;line-height:22.3px;color:#f5f5f5;font-weight:normal;font-style:normal;white-space:nowrap;will-change:transform;-webkit-text-stroke:0.3px #f5f5f5;">Co Host 2 - Kanwil DJKN Sulseltrabar</div>
<div style="position:absolute;left:0;top:1443px;width:2560px;height:102px;background:#17181b;border-radius:0 0 17px 17px;"></div>
<svg style="left:0;top:0" width="2560" height="1545"><g fill="none" stroke="#f5f5f5" stroke-width="2.6" stroke-linecap="round"><path d="M75.3,1474 L75.3,1460 A6.5,6.5 0 0 1 88.3,1460 L88.3,1474 A6.5,6.5 0 0 1 75.3,1474 Z"/><path d="M71,1475 A10.8,11 0 0 0 92.6,1475"/><line x1="81.8" y1="1486" x2="81.8" y2="1495"/><line x1="74.5" y1="1495" x2="89.2" y2="1495"/></g><line x1="62" y1="1494" x2="100.8" y2="1455.6" stroke="#17181b" stroke-width="8.5" stroke-linecap="round"/><line x1="62" y1="1494" x2="100.8" y2="1455.6" stroke="#eb1a5c" stroke-width="4.8" stroke-linecap="round"/><polyline points="131.7,1476.7 138.5,1469.8 145.3,1476.7" fill="none" stroke="#f5f5f5" stroke-width="2.2" stroke-linecap="round" stroke-linejoin="round"/><polyline points="290.09999999999997,1476.7 296.9,1469.8 303.7,1476.7" fill="none" stroke="#f5f5f5" stroke-width="2.2" stroke-linecap="round" stroke-linejoin="round"/><polyline points="934.0,1476.7 940.8,1469.8 947.5999999999999,1476.7" fill="none" stroke="#f5f5f5" stroke-width="2.2" stroke-linecap="round" stroke-linejoin="round"/><polyline points="1092.3,1476.7 1099.1,1469.8 1105.8999999999999,1476.7" fill="none" stroke="#f5f5f5" stroke-width="2.2" stroke-linecap="round" stroke-linejoin="round"/><polyline points="1236.2,1476.7 1243,1469.8 1249.8,1476.7" fill="none" stroke="#f5f5f5" stroke-width="2.2" stroke-linecap="round" stroke-linejoin="round"/><g fill="none" stroke="#f5f5f5" stroke-width="2.7" stroke-linejoin="round"><path d="M224,1464.2 L240,1464.2 A6.5,6.5 0 0 1 246.4,1470.7 L246.4,1484 A2.8,2.8 0 0 1 243.6,1486.8 L227,1486.8 A6.5,6.5 0 0 1 220.5,1480.3 L220.5,1467 A2.8,2.8 0 0 1 223.3,1464.2 Z"/><path d="M251,1472.4 L259.6,1465.6 L259.6,1485.4 L251,1478.8"/></g><g fill="none" stroke="#f5f5f5" stroke-width="2.6" stroke-linecap="round"><circle cx="839.9" cy="1465.5" r="4.1"/><circle cx="853.2" cy="1470.9" r="4.1"/><path d="M845.5,1478.5 C843,1476.5 840,1476 837,1476 C831,1476 828,1480 828,1484 L828,1486 C828,1488 829.5,1489.3 831.5,1489.3 L841.5,1489.3"/><path d="M848,1480.3 L858,1480.3 C860,1480.3 861.3,1482.5 861.3,1485 C861.3,1487.8 859.8,1489.3 857.5,1489.3 L849,1489.3 C846.5,1489.3 845.2,1487.8 845.2,1485.3 C845.2,1482.3 846.3,1480.3 848,1480.3 Z"/></g><g fill="none" stroke="#f5f5f5" stroke-width="2.6" stroke-linecap="round" stroke-linejoin="round"><path d="M1031.5,1460.5 C1033,1457.5 1036,1456 1041,1456 L1051,1456"/><path d="M1056.5,1476.8 L1059,1473.5"/><path d="M1030,1465.8 L1044,1465.8 C1049,1465.8 1051.3,1468.5 1051.3,1473.5 L1051.3,1481 C1051.3,1485.5 1049,1487.8 1044.5,1487.8 L1040,1487.8 L1032.5,1493.2 L1034,1487.8 L1030,1487.8 C1025.5,1487.8 1023.5,1485.5 1023.5,1481 L1023.5,1473 C1023.5,1468.3 1025.5,1465.8 1030,1465.8 Z"/></g><circle cx="1030.7" cy="1477" r="1.9" fill="#f5f5f5"/><circle cx="1037.4" cy="1477" r="1.9" fill="#f5f5f5"/><circle cx="1044.1" cy="1477" r="1.9" fill="#f5f5f5"/><circle cx="1063.8" cy="1460.4" r="14" fill="#ffd5dc"/><circle cx="1063.8" cy="1460.4" r="12.6" fill="#e31a3b"/></svg>
<div style="position:absolute;left:1048.8px;top:1452.0px;width:30px;text-align:center;font-size:17.5px;line-height:17.5px;color:#fff;font-weight:bold;font-style:normal;white-space:nowrap;will-change:transform;">9</div>
<svg style="left:0;top:0" width="2560" height="1545"><path d="M1188.3,1492.5 L1174.5,1472 C1170.8,1466.3 1173.5,1458.5 1180.5,1457 C1186.5,1455.8 1191,1459.8 1194.8,1464.3 C1200,1461.3 1206,1460.5 1210.5,1464 C1216,1468.5 1214.5,1476.2 1208.5,1480.3 Z" fill="none" stroke="#f5f5f5" stroke-width="2.6" stroke-linejoin="round"/><rect x="1315.8" y="1457" width="42.9" height="35.8" rx="5.5" fill="#0ff08e"/><g fill="none" stroke="#17181b" stroke-width="4.4" stroke-linecap="round" stroke-linejoin="round"><line x1="1337.2" y1="1468" x2="1337.2" y2="1484"/><polyline points="1329.8,1474.6 1337.2,1467.2 1344.6,1474.6"/></g><g fill="none" stroke="#f5f5f5" stroke-width="2.6" stroke-linecap="round"><path d="M1463.8,1472 L1463.8,1465 A7.5,7.5 0 0 1 1471.3,1457.5 L1479.3,1457.5"/><path d="M1498.9,1477 L1498.9,1484.8 A7.5,7.5 0 0 1 1491.4,1492.3 L1483.5,1492.3"/><circle cx="1492" cy="1464.2" r="6.5"/><circle cx="1470.7" cy="1485.6" r="6.5"/></g><circle cx="1629" cy="1474.9" r="18.9" fill="none" stroke="#f5f5f5" stroke-width="2.3"/><circle cx="1629" cy="1474.9" r="8.1" fill="#f5f5f5"/><circle cx="1783.9" cy="1474.9" r="19.9" fill="none" stroke="#f5f5f5" stroke-width="2.4"/><circle cx="1783.9" cy="1465.1" r="2.4" fill="#f5f5f5"/><path d="M1779.8,1470.6 L1785.9,1470.6 L1785.9,1484.2 L1788.4,1484.8 L1788.4,1486.3 L1779.4,1486.3 L1779.4,1484.8 L1781.9,1484.2 L1781.9,1472.4 L1779.8,1472 Z" fill="#f5f5f5"/><circle cx="1933.5" cy="1474.9" r="19.9" fill="none" stroke="#f5f5f5" stroke-width="2.4"/><circle cx="1922.9" cy="1474.9" r="2.9" fill="#f5f5f5"/><circle cx="1933.5" cy="1474.9" r="2.9" fill="#f5f5f5"/><circle cx="1944" cy="1474.9" r="2.9" fill="#f5f5f5"/><g fill="none" stroke="#f5f5f5" stroke-width="2.4" stroke-linejoin="round" stroke-linecap="round"><circle cx="2480.9" cy="1464" r="5.6"/><path d="M2476,1470.5 C2472,1472 2469,1474.5 2468.3,1477 C2467.6,1479.2 2469.3,1480.8 2471.3,1480 L2474.5,1477 L2473,1484 L2467.6,1492.2 C2466.5,1494 2468,1495.6 2470,1495 L2476.5,1488 L2478.5,1485 L2480.5,1493.3 C2481,1495.3 2484,1495.3 2484.3,1493.2 L2483.3,1484 L2484.5,1477.5 L2487,1480.5 C2488.5,1481.8 2490.5,1480.3 2489.8,1478.3 L2486.5,1472 C2484.5,1470 2480,1469.8 2476,1470.5 Z"/></g><g fill="none" stroke="#e3195b" stroke-width="2.6" stroke-linejoin="round" stroke-linecap="round"><path d="M2482,1454.6 L2507,1454.6 L2507,1487 L2495.6,1493.8 L2495.6,1463.2 L2506,1455.5"/></g></svg>
<div style="position:absolute;left:-18.3px;top:1510.2px;width:200px;text-align:center;font-size:21.5px;line-height:21.5px;color:#c6c6c8;font-weight:normal;font-style:normal;white-space:nowrap;will-change:transform;letter-spacing:0.6px;-webkit-text-stroke:0.35px #c6c6c8;">Audio</div>
<div style="position:absolute;left:140.2px;top:1510.2px;width:200px;text-align:center;font-size:21.5px;line-height:21.5px;color:#c6c6c8;font-weight:normal;font-style:normal;white-space:nowrap;will-change:transform;letter-spacing:0.6px;-webkit-text-stroke:0.35px #c6c6c8;">Video</div>
<div style="position:absolute;left:746.7px;top:1510.2px;width:200px;text-align:center;font-size:21.5px;line-height:21.5px;color:#c6c6c8;font-weight:normal;font-style:normal;white-space:nowrap;will-change:transform;letter-spacing:0.6px;-webkit-text-stroke:0.35px #c6c6c8;">Participants</div>
<div style="position:absolute;left:941.7px;top:1510.2px;width:200px;text-align:center;font-size:21.5px;line-height:21.5px;color:#c6c6c8;font-weight:normal;font-style:normal;white-space:nowrap;will-change:transform;letter-spacing:0.6px;-webkit-text-stroke:0.35px #c6c6c8;">Chat</div>
<div style="position:absolute;left:1093.7px;top:1510.2px;width:200px;text-align:center;font-size:21.5px;line-height:21.5px;color:#c6c6c8;font-weight:normal;font-style:normal;white-space:nowrap;will-change:transform;letter-spacing:0.6px;-webkit-text-stroke:0.35px #c6c6c8;">React</div>
<div style="position:absolute;left:1237.2px;top:1510.2px;width:200px;text-align:center;font-size:21.5px;line-height:21.5px;color:#c6c6c8;font-weight:normal;font-style:normal;white-space:nowrap;will-change:transform;letter-spacing:0.6px;-webkit-text-stroke:0.35px #c6c6c8;">Share</div>
<div style="position:absolute;left:1381.5px;top:1510.2px;width:200px;text-align:center;font-size:21.5px;line-height:21.5px;color:#c6c6c8;font-weight:normal;font-style:normal;white-space:nowrap;will-change:transform;letter-spacing:0.6px;-webkit-text-stroke:0.35px #c6c6c8;">Apps</div>
<div style="position:absolute;left:1528.9px;top:1510.2px;width:200px;text-align:center;font-size:21.5px;line-height:21.5px;color:#c6c6c8;font-weight:normal;font-style:normal;white-space:nowrap;will-change:transform;letter-spacing:0.6px;-webkit-text-stroke:0.35px #c6c6c8;">Record</div>
<div style="position:absolute;left:1683.1px;top:1510.2px;width:200px;text-align:center;font-size:21.5px;line-height:21.5px;color:#c6c6c8;font-weight:normal;font-style:normal;white-space:nowrap;will-change:transform;letter-spacing:0.6px;-webkit-text-stroke:0.35px #c6c6c8;">Meeting info</div>
<div style="position:absolute;left:1833.2px;top:1510.2px;width:200px;text-align:center;font-size:21.5px;line-height:21.5px;color:#c6c6c8;font-weight:normal;font-style:normal;white-space:nowrap;will-change:transform;letter-spacing:0.6px;-webkit-text-stroke:0.35px #c6c6c8;">More</div>
<div style="position:absolute;left:2386.9px;top:1510.2px;width:200px;text-align:center;font-size:21.5px;line-height:21.5px;color:#c6c6c8;font-weight:normal;font-style:normal;white-space:nowrap;will-change:transform;letter-spacing:0.6px;-webkit-text-stroke:0.35px #c6c6c8;">Leave</div>
<div style="position:absolute;left:875.4px;top:1462.4px;font-size:21px;line-height:21px;color:#c4c4c6;font-weight:normal;font-style:normal;white-space:nowrap;will-change:transform;-webkit-text-stroke:0.4px #c4c4c6;letter-spacing:0.3px;">162</div>
<div style="position:absolute;left:0;top:0;width:2560px;height:1545px;border:1px solid #5a5a5a;border-left:2px solid #6a6a6a;border-top:none;border-radius:0 0 17px 17px;"></div>
</body></html>
